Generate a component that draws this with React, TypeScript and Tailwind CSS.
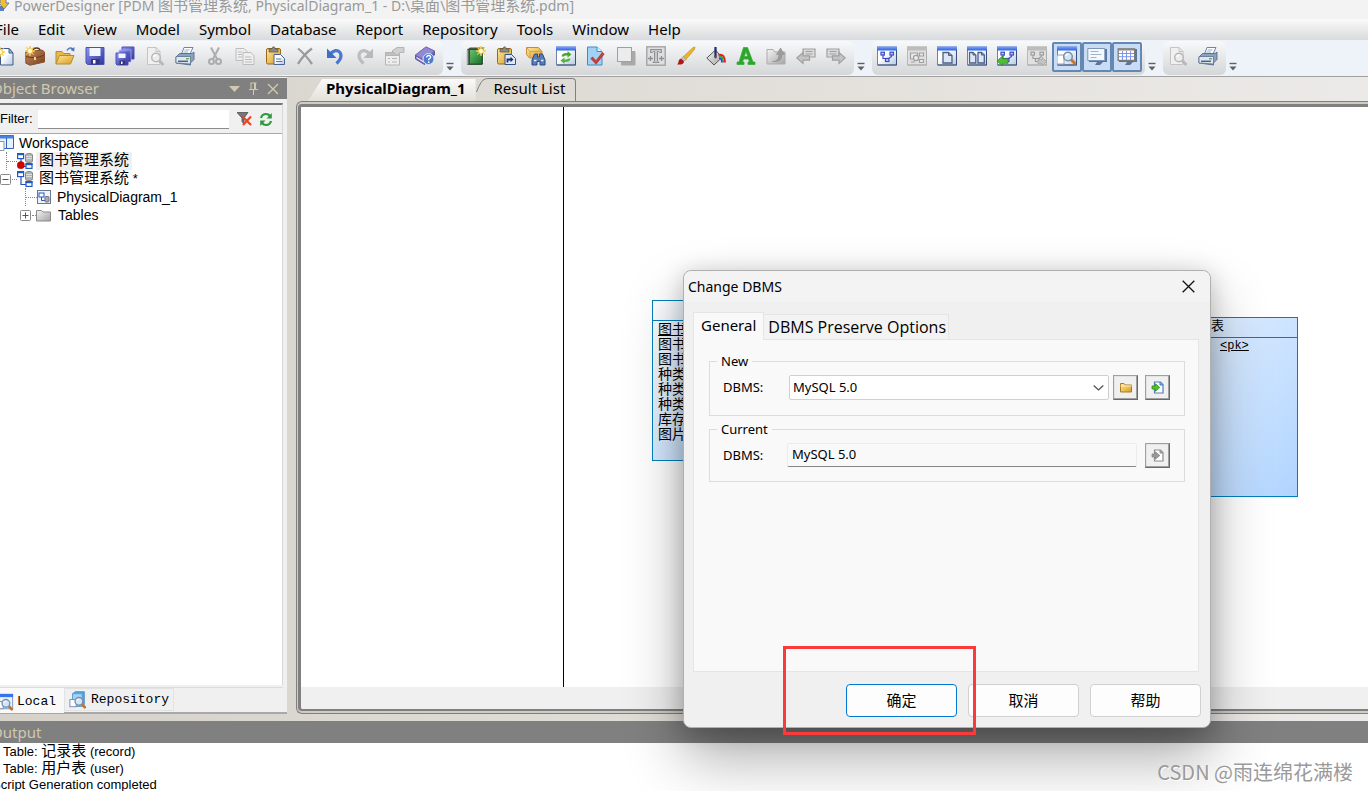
import React, { useState } from "react";

type IconName =
  | "new" | "case" | "open" | "save" | "saveAll" | "preview" | "print" | "cut" | "copy" | "paste"
  | "delete" | "undo" | "redo" | "props" | "help" | "book" | "pasteLink" | "find" | "refreshWin"
  | "check" | "shadow" | "textFmt" | "brush" | "bucket" | "fontA" | "folderUp" | "back" | "forward"
  | "diagram" | "diagramGrey" | "page" | "pages" | "diagramBack" | "diagramFwd" | "browser"
  | "output" | "list";

const Gradients = () => (
  <svg width="0" height="0" className="absolute" aria-hidden="true">
    <defs>
      <linearGradient id="gGold" x1="0" y1="0" x2="1" y2="1"><stop offset="0" stopColor="#ffe9a0" /><stop offset="1" stopColor="#d99a1c" /></linearGradient>
      <linearGradient id="gBrown" x1="0" y1="0" x2="1" y2="1"><stop offset="0" stopColor="#c98a5a" /><stop offset="1" stopColor="#74401f" /></linearGradient>
      <linearGradient id="gBlue" x1="0" y1="0" x2="1" y2="1"><stop offset="0" stopColor="#8f96f0" /><stop offset="1" stopColor="#2c339c" /></linearGradient>
      <linearGradient id="gPage" x1="0" y1="0" x2="1" y2="1"><stop offset="0.4" stopColor="#ffffff" /><stop offset="1" stopColor="#b4c8e4" /></linearGradient>
      <linearGradient id="gGrey" x1="0" y1="0" x2="1" y2="1"><stop offset="0" stopColor="#f4f4f4" /><stop offset="1" stopColor="#a4a4a4" /></linearGradient>
      <linearGradient id="gGreen" x1="0" y1="0" x2="1" y2="1"><stop offset="0" stopColor="#6cc46c" /><stop offset="1" stopColor="#17702a" /></linearGradient>
      <linearGradient id="gBar" x1="0" y1="0" x2="0" y2="1"><stop offset="0" stopColor="#7ba6ff" /><stop offset="1" stopColor="#2f62dc" /></linearGradient>
    </defs>
  </svg>
);

const Star = ({ x, y }: { x: number; y: number }) => (
  <g transform={`translate(${x} ${y})`}>
    <path d="M0-5 1-1.6 3.6-3.6 1.8-.9 5 0 1.8 1 3.6 3.6 1 1.7 0 5-1 1.7-3.6 3.6-1.8 1-5 0-1.8-.9-3.6-3.6-1-1.6z" fill="#ffd84a" stroke="#f5c64a" strokeWidth=".8" />
    <circle r="2" fill="#fffbe0" />
  </g>
);

const Lens = ({ x, y, grey }: { x: number; y: number; grey?: boolean }) => (
  <g transform={`translate(${x} ${y})`}>
    <path d="M3 3 6.500 6.500" stroke={grey ? "#b8b8b8" : "#c8752a"} strokeWidth="3" strokeLinecap="round" />
    <circle r="4.300" fill={grey ? "#ececec" : "#cfe6fa"} stroke={grey ? "#b8b8b8" : "#7c8ea4"} strokeWidth="1.500" />
    <path d="M-2.300-.5A2.500 2.500 0 0 1 .5-2.300" stroke="#fff" strokeWidth="1.300" fill="none" />
  </g>
);

const Win = ({ grey, children }: { grey?: boolean; children?: React.ReactNode }) => (
  <>
    <rect x=".5" y="1" width="19" height="18" fill={grey ? "#e0e0e0" : "url(#gPage)"} stroke={grey ? "#b8b8b8" : "#6d82a8"} />
    <path d="M19.500 4v15H1" fill="none" stroke={grey ? "#acacac" : "#3c5078"} />
    <rect x="0" y=".5" width="20" height="4" fill={grey ? "#bcbcbc" : "url(#gBar)"} />
    {children}
  </>
);

const Nodes = ({ grey }: { grey?: boolean }) => (
  <g fill={grey ? "#e8e8e8" : "#c8d0ff"} stroke={grey ? "#9c9c9c" : "#3a49c4"} strokeWidth="1.200">
    <path d="M6 9v3.500h3M14.500 9v1.500L11 13" fill="none" />
    <rect x="4" y="6.200" width="3.400" height="2.800" /><rect x="13" y="6.200" width="3.400" height="2.800" /><rect x="8.500" y="12.500" width="3.400" height="3" />
  </g>
);

const Printer = () => (
  <>
    <path d="m6.500 8 2.500-6.500h9L15 8z" fill="#fff" stroke="#6d86a8" />
    <path d="m9.500 4h5M8.500 6H13" stroke="#9ab0cc" />
    <path d="M1 11 4.500 7.500h12.500l2-1.500v7.500L15.500 17v2L1 17z" fill="#8da2bd" stroke="#4c6280" strokeWidth=".8" />
    <path d="M1 10.500h14.500V18L1 17z" fill="#dfe8f2" stroke="#5a7090" strokeWidth=".8" />
    <path d="M3 15.300h10" stroke="#4c6280" strokeWidth="1.500" /><path d="M11 12.700h3" stroke="#56b552" strokeWidth="1.400" />
  </>
);

const Clip = () => (
  <>
    <rect x="1.500" y="2.500" width="14" height="15.500" rx="1.500" fill="url(#gGold)" stroke="#9a6a12" />
    <path d="M4 6V3h3q.3-2.300 1.600-2.300T10.200 3h2.800v3z" fill="#8a8a8a" stroke="#555" strokeWidth=".7" />
  </>
);

function glyph(name: IconName): React.ReactNode {
  switch (name) {
    case "new":
      return <><path d="M5.500 2.500H14l4 4.500v12H5.500z" fill="url(#gPage)" stroke="#3e5c86" /><path d="M14 2.500V7h4z" fill="#a4c0e4" stroke="#3e5c86" /><Star x={5} y={6} /></>;
    case "case":
      return <><path d="M8 5q0-3 3.500-3T15 5" fill="none" stroke="#5f3417" strokeWidth="1.600" /><path d="M.8 6 17 4l2.500 2V16L5 19.200l-4.200-2z" fill="url(#gBrown)" stroke="#8a5030" /><path d="M1 10.500q10 3 18-1.500" stroke="#6a3c1c" fill="none" /><path d="M10 11v3" stroke="#f3d38a" strokeWidth="2" /><Star x={5} y={5} /></>;
    case "open":
      return <><path d="M1 18V5.500h6l1.500 2H15V11" fill="#e9b84a" stroke="#b98a2c" /><path d="m1 18 3.500-8.500H19L15.500 18z" fill="url(#gGold)" stroke="#b98a2c" /><path d="M12 4.500q2-4 6-1.500" fill="none" stroke="#4f78b8" strokeWidth="1.500" /><path d="m19.500 1-.3 4.600L15.500 4z" fill="#4f78b8" /></>;
    case "save":
      return <><path d="M1 1.500h18v17H2.500L1 17z" fill="url(#gBlue)" stroke="#4a50b8" /><path d="M4.500 2h11v8h-11z" fill="#f2f5ff" /><path d="M6 13h8.500v5.500H6z" fill="#35357a" /><path d="M8 14h2.500v3.500H8z" fill="#fff" /></>;
    case "saveAll":
      return <><path d="M7 1h12v12H7z" fill="url(#gBlue)" stroke="#4a50b8" /><path d="M4 4h12v12H4z" fill="url(#gBlue)" stroke="#b8bcf4" strokeWidth=".7" /><path d="M1 7h12v12H2l-1-1z" fill="url(#gBlue)" stroke="#4a50b8" /><path d="M3.500 7.500h7v4.500h-7z" fill="#f2f5ff" /><path d="M4.500 14.500h5.500V19H4.500z" fill="#35357a" /><path d="M6 15.500h1.500V18H6z" fill="#fff" /></>;
    case "preview":
      return <><path d="M2.500 1.500H11l4 4v13H2.500z" fill="#f0f0f0" stroke="#c4c4c4" /><path d="M11 1.500v4h4" fill="none" stroke="#c4c4c4" /><Lens x={11} y={11.5} grey /></>;
    case "print":
      return <Printer />;
    case "cut":
      return <g stroke="#adadad" fill="none" strokeWidth="2"><path d="M6 1.500 12 13M14 1.500 8 13" /><circle cx="6.500" cy="15.500" r="2.500" /><circle cx="13.500" cy="15.500" r="2.500" /></g>;
    case "copy":
      return <g fill="#eee" stroke="#bcbcbc"><path d="M1 2.500h8l3 3v9H1z" /><path d="M8 6.500h8l3 3v9H8z" /><path d="M10 11h6M10 13.500h7M10 16h7M3 6h4M3 8.500h4M3 11h4" /></g>;
    case "paste":
      return <><Clip /><path d="M9 8.500h6.500l4 4v6H9z" fill="url(#gPage)" stroke="#4a6594" /><path d="M11 13h5M11 15.500h6.500" stroke="#5876a8" /></>;
    case "delete":
      return <path d="M3 2.500Q10 8 17 18M17 2.500Q9 8 3 18" stroke="#9a9a9a" strokeWidth="2.200" fill="none" />;
    case "undo":
      return <><path d="M5 8q6-6 10-1.500 3 5-3.500 11" fill="none" stroke="#4a78d0" strokeWidth="3.200" /><path d="M2 2.500v9.500h9.500z" fill="#3e6fc4" /></>;
    case "redo":
      return <><path d="M15 8q-6-6-10-1.500-3 5 3.500 11" fill="none" stroke="#bdbdbd" strokeWidth="3.200" /><path d="M18 2.500v9.500H8.500z" fill="#b9b9b9" /></>;
    case "props":
      return <g stroke="#b4b4b4"><path d="M.5 6.500h14V19H.5z" fill="#eee" /><path d="M.5 6.500h14v3H.5z" fill="#c0c0c0" /><path d="M3 12.500h2M7 12.500h5M3 16h2M7 16h5" /><path d="M7 5l5-3.500h7v5h-4l-3 3z" fill="#d0d0d0" /></g>;
    case "help":
      return <><path d="M.5 9 11 1l8.500 4v4L9.500 18.500.5 13z" fill="#6e5fb0" stroke="#6455a0" /><path d="M.5 9 11 1l8.500 4L9.500 14z" fill="#9488d0" stroke="#7264b6" strokeWidth=".6" /><path d="m1.500 11.500 8 5" stroke="#f0eefc" strokeWidth="1.200" /><circle cx="13.500" cy="13" r="5.500" fill="#4c7cd0" stroke="#dbe8fb" /><path d="M11.600 11.500q.2-2 2.100-2t1.900 1.800q0 1-1.900 2v1" fill="none" stroke="#fff" strokeWidth="1.400" /><circle cx="13.700" cy="16.200" r=".9" fill="#fff" /></>;
    case "book":
      return <><path d="M1 3.500 4 1.500h14V17l-2 2H1z" fill="#4a564a" /><path d="M3.500 3.500h12.500V18H3.500z" fill="url(#gGreen)" stroke="#1b5b28" /><path d="M1.500 4v14.500" stroke="#9aa" strokeWidth="1.500" /><path d="M17.500 4v13.500" stroke="#fff" /><Star x={15} y={5} /></>;
    case "pasteLink":
      return <><Clip /><path d="M9 8.500h6.500l4 4v6H9z" fill="#dfe9fa" stroke="#32508a" /><path d="M11.500 16.500v-3h3.500" stroke="#1b2f70" strokeWidth="1.800" fill="none" /><path d="m14.500 10.800 3 2.700-3 2.700z" fill="#1b2f70" /></>;
    case "find":
      return <><path d="M.5 1.500h12l3.500 4V12H3.500L.5 8.500z" fill="url(#gGold)" stroke="#c98b38" /><path d="M.5 1.500 4 5.500h12M4 5.500V12" fill="none" stroke="#d9a050" /><path d="M8.500 8h3v3h2V8h3l2.500 6v5h-5v-3.500h-3V19h-5v-5z" fill="#567db8" stroke="#2d4d85" /><path d="M8 14.500h2.500M15 14.500h2.500" stroke="#dcebff" strokeWidth="1.600" /></>;
    case "refreshWin":
      return <Win><path d="M5.500 10.500q.5-3.500 4.500-3.500h1.500V5L15.500 8.400l-4 3V9.500H10q-1.500 0-2 1z" fill="#4aa52c" /><path d="M14.500 12.500q-.5 3.500-4.500 3.500H8.500v2L4.500 14.600l4-3v1.900H10q1.500 0 2-1z" fill="#5ab53a" /></Win>;
    case "check":
      return <><path d="M1.500 1H11l5 4.500v13.500H1.500z" fill="#9fd2f4" stroke="#3f8cc8" /><path d="M11 1v4.500h5" fill="#e4f4ff" stroke="#3f8cc8" /><path d="m5.500 11.500 4.500 5L17.500 7" fill="none" stroke="#c04040" strokeWidth="3" /></>;
    case "shadow":
      return <><rect x="5" y="5" width="14.500" height="14.500" rx="1" fill="#a9a9a9" /><rect x="1.500" y="1.500" width="14" height="14" fill="#ececec" stroke="#a0a0a0" /></>;
    case "textFmt":
      return <><rect x=".8" y=".8" width="18.400" height="18.400" fill="#dedede" stroke="#a4a4a4" strokeWidth="1.400" /><path d="M4.500 6.500V3.500h11v3h-2l-1-1h-1v9.500l1.500 1.500H7l1.500-1.500V5.500h-1l-1 1z" fill="#c8c8c8" stroke="#909090" /><path d="M2 12.500h5M4.500 10v5M13 12.500h5M15.500 10v5" stroke="#909090" strokeWidth="1.300" /></>;
    case "brush":
      return <><path d="m7 11 10-9.500 2-.5-.5 2.500L9.500 14z" fill="#e9b42c" stroke="#c8952a" strokeWidth=".7" /><path d="m5.500 12 2-1.500 2.500 3L8.500 15z" fill="#c9c9c9" stroke="#888" strokeWidth=".6" /><path d="M1 18.500q1.500-1 1.500-3t2.500-3l3 2.700q0 4-7 3.300z" fill="#b81414" /></>;
    case "bucket":
      return <><path d="M.8 12 9.500 4l6.500 7.500L8 19z" fill="url(#gGrey)" stroke="#555" /><path d="M9.500 11V1" stroke="#1c2a6c" strokeWidth="2.200" /><circle cx="9.500" cy="11" r="1.400" fill="#555" /><path d="M12.500 9q6.500-1.500 6.500 7.500" stroke="#e02020" strokeWidth="2" fill="none" /><path d="M13 10.500q4.500-.5 4.300 6" stroke="#20b030" strokeWidth="1.600" fill="none" /><path d="M13 12q3 0 2.800 4.500" stroke="#2040e0" strokeWidth="1.600" fill="none" /></>;
    case "fontA":
      return <path d="M7.500 1.500h4L17 16h2v2.500h-7V16h1.500l-1-3h-5L6.500 16H8v2.500H1V16h2zM8.300 10.500h3.400L10 5.500z" fill="#2ba52b" stroke="#3aae3a" strokeWidth=".8" fillRule="evenodd" />;
    case "folderUp":
      return <g stroke="#acacac"><path d="M1 18V3.500h6l2 2.500h10v12z" fill="url(#gGrey)" /><path d="M6.500 15.500q6 .5 6.500-7h-2.500L14.500 2l4 6.500H16q0 8-9.500 7z" fill="#9c9c9c" stroke="#888" strokeWidth=".5" /></g>;
    case "back":
      return <g fill="#dadada" stroke="#a0a0a0" strokeWidth="1.200"><path d="M7 3h12v8H7z" /><path d="M9.500 5.500h7M9.500 8h7" /><path d="M.8 12 7 6.500v3.300h6.500v4.400H7v3.300z" fill="#c4c4c4" /></g>;
    case "forward":
      return <g fill="#dadada" stroke="#a0a0a0" strokeWidth="1.200"><path d="M1 3h12v8H1z" /><path d="M3.500 5.500h7M3.500 8h7" /><path d="M19.200 12 13 6.500v3.300H6.500v4.400H13v3.300z" fill="#c4c4c4" /></g>;
    case "diagram":
      return <Win><Nodes /></Win>;
    case "diagramGrey":
      return <Win grey><g fill="#eaeaea" stroke="#a0a0a0" strokeWidth="1.200"><path d="M3.500 7h7v6h-7z" /><circle cx="9" cy="12" r="2.600" /><path d="M12.500 7h4v3h-4zM12.500 13.500h4v3h-4zM4 16h4" /></g></Win>;
    case "page":
      return <Win><path d="M6 6.500h5.500L15 9.500V17H6z" fill="#dce6f6" stroke="#4c5f84" strokeWidth="1.300" /><path d="M11.500 6.500v3H15" fill="#8298c0" stroke="#4c5f84" /></Win>;
    case "pages":
      return <Win><path d="M2.500 6.500H6L8.800 9v8H2.500zM11 6.500h3.500l2.800 2.500v8H11z" fill="#dce6f6" stroke="#4c5f84" strokeWidth="1.300" /><path d="M6 6.500V9h2.800M14.500 6.500V9h2.800" fill="#8298c0" stroke="#4c5f84" /></Win>;
    case "diagramBack":
      return <Win><Nodes /><path d="M0 15 5.500 10v2.800H11v4.500H5.500V20z" fill="#4fbf34" stroke="#2e8d28" strokeWidth=".8" /></Win>;
    case "diagramFwd":
      return <Win grey><Nodes grey /><path d="M19.500 15.500 15 11.500v2.200h-4v4h4v2.300z" fill="#c4c4c4" stroke="#acacac" /></Win>;
    case "browser":
      return <Win><rect x="0" y="9" width="7" height="9" fill="#fff" stroke="#8ca0bc" /><Lens x={11} y={10.5} /></Win>;
    case "output":
      return <><path d="M2 3h18v13h-4l-3 3H8l2-3H2z" fill="#5b7599" /><path d="M.8 2.500h17V14.500h-17z" fill="#f4f8ff" stroke="#7d95b8" /><path d="M3.500 5.500h8M3.500 8.500h11M3.500 11.500h6" stroke="#a4b2c6" /></>;
    case "list":
      return <><path d="M2 3h18v13h-4l-3 3H8l2-3H2z" fill="#5b7599" /><path d="M1.200 2.800h16.500v11.500H1.200z" fill="#fff" stroke="#7a7a78" strokeWidth="1.300" /><path d="M1.500 3.500h16" stroke="#868684" strokeWidth="2" /><path d="M2 7.500h15M2 10.700h15M5.500 5v9M9.500 5v9M13.500 5v9" stroke="#7f97e6" /></>;
  }
}

function ToolButton({ name, label, pressed }: { name: IconName; label: string; pressed?: boolean }) {
  return (
    <button
      type="button"
      aria-label={label}
      aria-pressed={pressed}
      className={
        pressed
          ? "flex h-[30px] w-[30px] shrink-0 items-start justify-center rounded-xs border-2 border-[#6488b4] bg-[#c9dcf4] pt-0.5"
          : "flex h-[30px] w-[30px] shrink-0 items-start justify-center pt-1"
      }
    >
      <svg width="20" height="20" viewBox="0 0 20 20">{glyph(name)}</svg>
    </button>
  );
}

const Overflow = ({ label }: { label: string }) => (
  <button type="button" aria-label={label} className="flex w-[18px] shrink-0 items-end pb-1 pl-0.5">
    <svg width="10" height="10" viewBox="0 0 10 10"><path d="M1.500 1.500h7" stroke="#606060" strokeWidth="1.400" /><path d="M1.500 4.500h7L5 8.500z" fill="#606060" /></svg>
  </button>
);

type Tool = [IconName, string, boolean?];
const groups: Tool[][] = [
  [["new", "New"], ["case", "New Project"], ["open", "Open"], ["save", "Save"], ["saveAll", "Save All"], ["preview", "Print Preview"], ["print", "Print"], ["cut", "Cut"], ["copy", "Copy"], ["paste", "Paste"], ["delete", "Delete"], ["undo", "Undo"], ["redo", "Redo"], ["props", "Properties"], ["help", "Help"]],
  [["book", "New Report"], ["pasteLink", "Paste as Shortcut"], ["find", "Find Objects"], ["refreshWin", "Refresh"], ["check", "Check Model"], ["shadow", "Shadow"], ["textFmt", "Adjust to Text"], ["brush", "Line Style"], ["bucket", "Fill"], ["fontA", "Font"], ["folderUp", "Up One Level"], ["back", "Previous"], ["forward", "Next"]],
  [["diagram", "Diagram"], ["diagramGrey", "View Diagram"], ["page", "Page"], ["pages", "All Pages"], ["diagramBack", "Previous Diagram"], ["diagramFwd", "Next Diagram"], ["browser", "Browser", true], ["output", "Output", true], ["list", "Result List", true]],
  [["preview", "Preview"], ["print", "Print Diagram"]],
];

const menus = ["File", "Edit", "View", "Model", "Symbol", "Database", "Report", "Repository", "Tools", "Window", "Help"];

const ModelIcon = ({ dot }: { dot?: boolean }) => (
  <svg width="16" height="16" viewBox="0 0 16 16" className="shrink-0">
    <path d="M4 5v8.500h5" fill="none" stroke="#2a4fb0" strokeWidth="1.200" />
    <rect x=".6" y=".6" width="6" height="5" fill="#fff" stroke="#1e5ac8" strokeWidth="1.200" /><path d="M0 1.200h7" stroke="#1e5ac8" strokeWidth="2" />
    <path d="M8.500 2q0-1.500 3.500-1.500T15.500 2v6q0 1.500-3.500 1.500T8.500 8z" fill="#b4b4b4" stroke="#888" /><path d="M9 3.500h6M9 5.500h6" stroke="#ddd" />
    <rect x="9" y="10.600" width="6" height="4.800" fill="#fff" stroke="#1e5ac8" strokeWidth="1.200" /><path d="M8.500 11.200h7" stroke="#1e5ac8" strokeWidth="2" />
    {dot && <circle cx="3.800" cy="12.200" r="3.600" fill="#d40000" stroke="#900" strokeWidth=".5" />}
  </svg>
);

const Expander = ({ open }: { open: boolean }) => (
  <svg width="11" height="11" viewBox="0 0 11 11" className="shrink-0">
    <rect x=".5" y=".5" width="10" height="10" rx="1" fill="#fff" stroke="#8a8a8a" />
    <path d={open ? "M2.500 5.500h6" : "M2.500 5.500h6M5.500 2.500v6"} stroke="#2a5aa8" />
  </svg>
);

const BrowserIcon = ({ server }: { server?: boolean }) => (
  <svg width="18" height="18" viewBox="0 0 20 20">
    {server ? (
      <><path d="M4 3 7 .8h10V15l-2.500 2H4z" fill="#5aa2d8" stroke="#4a90cc" /><path d="M4 3h10.500v14H4z" fill="#a4d4f4" stroke="#5aa2d8" /></>
    ) : (
      <><rect x="1.500" y="1.500" width="17" height="16" fill="#e8f2ff" stroke="#6d92c8" /><path d="M1 2.800h18" stroke="#3874e8" strokeWidth="3.600" /></>
    )}
    <rect x="1" y="9.500" width="7" height="8" fill="#fff" stroke="#7488a8" /><Lens x={11} y={11.5} />
  </svg>
);

function ObjectBrowser() {
  return (
    <aside className="flex w-[287px] shrink-0 flex-col border-b-2 border-[#a8a8a8] bg-[#f0f0f0]">
      <header className="mt-px flex h-[21px] items-center overflow-hidden bg-[#808080] pr-2 text-[15px] leading-5 text-[#d0c9ae]">
        <span className="-ml-[9px] flex-1 pb-0.5">Object Browser</span>
        <button type="button" aria-label="Panel menu" className="mr-2"><svg width="11" height="6"><path d="M0 0h11L5.500 6z" fill="#d0c9ae" /></svg></button>
        <button type="button" aria-label="Pin" className="mr-2"><svg width="11" height="13" viewBox="0 0 11 13"><path d="M2.500 1h6M3 1v6M7.500 1v6M6.500 1v6M1 7.500h9M5.500 7.500V13" stroke="#d0c9ae" /></svg></button>
        <button type="button" aria-label="Close panel"><svg width="12" height="12" viewBox="0 0 12 12"><path d="m1 1 10 10M11 1 1 11" stroke="#d0c9ae" strokeWidth="1.400" /></svg></button>
      </header>
      <div className="mt-1 mr-1 flex min-h-0 flex-1 flex-col border-t-2 border-r border-t-[#767676] border-r-[#d8d8d8] bg-white">
        <div className="flex h-[29px] shrink-0 items-center border-b border-[#a8a8a8] bg-[#f0f0f0] font-['Liberation_Sans','Noto_Sans_CJK_SC',sans-serif] text-[13px]">
          <label htmlFor="filter" className="w-[38px]">Filter:</label>
          <input id="filter" className="h-[19px] w-[191px] border-b border-[#8c8c8c] bg-white px-1 outline-none" />
          <button type="button" aria-label="Clear filter" className="ml-2"><svg width="16" height="14" viewBox="0 0 16 14"><path d="M0 .5h11L7 6v6L5 9.500V6z" fill="#777" stroke="#444" strokeWidth=".7" /><path d="m5.500 4.500 8.500 8.500M14 4.500 6 13" stroke="#f0431f" strokeWidth="2.200" /></svg></button>
          <button type="button" aria-label="Refresh" className="ml-1.5"><svg width="14" height="15" viewBox="0 0 14 15"><path d="M2 6q1-4 5-4 2.500 0 4 2M12 9q-1 4-5 4-2.500 0-4-2" fill="none" stroke="#2b9a3a" strokeWidth="2.200" /><path d="M12.800 1v5.500H7.500zM1.200 14V8.500h5.300z" fill="#2b9a3a" /></svg></button>
        </div>
        <ul className="flex-1 font-['Liberation_Sans','Noto_Sans_CJK_SC',sans-serif] text-[14px] leading-[18px]">
          <li className="flex h-[18px] items-center">
            <svg width="14" height="16" viewBox="0 0 14 16"><path d="M-2 .5h15.500v13H-2z" fill="#e8f0fb" stroke="#2e62c0" /><path d="M-2 2h15.500" stroke="#4a82e0" strokeWidth="3" /><path d="M6.500 3v10" stroke="#2e62c0" /><path d="M-1 6.500h5v9h-5z" fill="#fff" stroke="#8894a8" /></svg>
            <span className="ml-[5px]">Workspace</span>
          </li>
          <li className="flex h-[18px] items-center">
            <span className="ml-1.5 h-[18px] w-[11px] shrink-0 border-l border-dotted border-[#888]"><span className="mt-[9px] block border-t border-dotted border-[#888]" /></span>
            <ModelIcon dot />
            <span className="ml-[3px] h-[18px] bg-[#f0f0f0] px-[3px] text-[15px] leading-4">图书管理系统</span>
          </li>
          <li className="flex h-[18px] items-center">
            <Expander open /><span className="ml-px w-[5px] border-t border-dotted border-[#888]" />
            <ModelIcon />
            <span className="ml-1.5 h-[18px] text-[15px] leading-4">图书管理系统<span className="text-[13px]"> *</span></span>
          </li>
          <li className="flex h-[18px] items-center">
            <span className="ml-[25px] h-full w-[12px] border-l border-dotted border-[#888]"><span className="mt-[9px] block border-t border-dotted border-[#888]" /></span>
            <svg width="14" height="14" viewBox="0 0 14 14"><rect x=".5" y=".5" width="13" height="13" fill="#eef2fa" stroke="#6a7890" /><rect x="2" y="3" width="5" height="4" fill="#fff" stroke="#1e5ac8" /><path d="M4.500 7v3.500H8" stroke="#1e5ac8" fill="none" /><rect x="8" y="6.500" width="4" height="5.500" rx="1" fill="#aaa" stroke="#777" /></svg>
            <span className="ml-1.5">PhysicalDiagram_1</span>
          </li>
          <li className="flex h-[18px] items-center">
            <span className="ml-5 flex"><Expander open={false} /></span><span className="ml-px w-[4px] border-t border-dotted border-[#888]" />
            <svg width="15" height="13" viewBox="0 0 15 13"><path d="M.5 12V1.500h5L7 3h7.500v9z" fill="url(#gGrey)" stroke="#8a8a8a" /></svg>
            <span className="ml-[7px]">Tables</span>
          </li>
        </ul>
      </div>
      <div className="mt-0.5 mr-1 flex h-[25px] shrink-0 items-start border-t border-[#dcdcdc] font-['Liberation_Mono','Noto_Sans_CJK_SC',monospace] text-[13px]">
        <button type="button" className="-ml-1 flex h-[25px] items-end bg-[#f9f9f9] pr-2 pb-0.5 leading-[18px]"><BrowserIcon /><span className="ml-[3px]">Local</span></button>
        <button type="button" className="flex h-[23px] items-center border border-[#e2e2e2] px-1 leading-[18px]"><BrowserIcon server /><span className="ml-1">Repository</span></button>
      </div>
    </aside>
  );
}

const columns = ["图书", "图书", "图书", "种类", "种类", "种类", "库存", "图片"];

function Workspace() {
  return (
    <main className="flex min-w-0 flex-1 flex-col pb-[7px] pl-[9px]">
      <div className="flex h-6 shrink-0 items-end pl-3 text-[15px] leading-5">
        <button type="button" className="flex h-[22px] items-start bg-linear-to-b from-[#fafafa] to-[#e3e0da] pr-2.5 pl-[18px] font-bold [clip-path:polygon(14px_0,100%_0,100%_100%,0_100%)]"><span className="-mt-px">PhysicalDiagram_1</span></button>
        <button type="button" className="flex h-[23px] items-start">
          <svg width="14" height="23" viewBox="0 0 14 23"><path d="M.5 14Q5 2 9 1 10 .5 14 .5" fill="none" stroke="#808080" /></svg>
          <span className="h-full rounded-tr-sm border-t border-r border-[#808080] pr-2.5 pl-1"><span className="-mt-px block">Result List</span></span>
        </button>
      </div>
      <section className="flex min-h-0 flex-1 flex-col rounded-l-md border border-r-0 border-[#808080] bg-[#cfccc4] pt-0.5 pb-0.5 pl-px">
        <div className="flex min-h-0 flex-1 flex-col rounded-l-sm border-t-3 border-b-2 border-l-3 border-[#808080] bg-[#f0f0f0]">
          <div className="relative mb-[22px] flex-1 overflow-hidden bg-white text-[13px] leading-[15px]">
            <div className="absolute top-0 bottom-0 left-[262px] w-px bg-black" />
            <div className="absolute top-[193px] left-[351px] h-[161px] w-[120px] border border-[#0080c0] bg-linear-to-br from-white to-[#b0d4ff]">
              <div className="h-5 border-b border-[#0080c0]" />
              <ul className="pl-[5px] text-[14px] leading-[15px]">
                {columns.map((c, i) => (
                  <li key={i} className={i === 0 ? "underline" : ""}>{c}</li>
                ))}
              </ul>
            </div>
            <div className="absolute top-[210px] left-[869px] h-[180px] w-[128px] border border-[#0080c0] bg-linear-to-br from-[#e8f3ff] to-[#b0d4ff]">
              <div className="h-5 border-b border-[#0080c0] pl-10">表</div>
              <div className="pt-px pl-[49px] font-['Liberation_Mono',monospace] text-[12px] underline">&lt;pk&gt;</div>
            </div>
          </div>
        </div>
      </section>
    </main>
  );
}

const SmallButton = ({ label, disabled, children }: { label: string; disabled?: boolean; children: React.ReactNode }) => (
  <button type="button" aria-label={label} disabled={disabled} className="flex h-[25px] w-[25px] shrink-0 items-center justify-center border border-t-[#a0a0a0] border-r-[#696969] border-b-[#696969] border-l-[#a0a0a0] bg-[#f0f0f0] shadow-[inset_-1px_-1px_0_#a0a0a0,inset_1px_1px_0_#e3e3e3]">
    {children}
  </button>
);

const ImportIcon = ({ grey }: { grey?: boolean }) => (
  <svg width="13" height="13" viewBox="0 0 13 13">
    <path d="M3.500 1h6l2.500 2.500v8.500H3.500z" fill="#fff" stroke={grey ? "#8c8c8c" : "#5a78b4"} strokeWidth="1.200" />
    <path d="M9 1v3h3" fill={grey ? "#aaa" : "#7ec0f0"} stroke={grey ? "#8c8c8c" : "#2a7ed0"} />
    <path d="M1 5h3.500V2.800L8.800 6.500 4.500 10.200V8H1z" fill={grey ? "#999" : "#4ec822"} stroke={grey ? "#888" : "#2f9018"} strokeWidth=".8" />
  </svg>
);

function ChangeDbmsDialog() {
  const [dbms, setDbms] = useState("MySQL 5.0");
  const action = "h-[33px] w-[111px] rounded-[4px] border bg-[#fdfdfd] text-[15px] font-['Noto_Sans_CJK_SC',sans-serif]";
  return (
    <div role="dialog" aria-labelledby="dlg-title" className="absolute top-[270px] left-1/2 -ml-px w-[528px] rounded-lg border border-[#b0b0b0] bg-[#f0f0f0] pb-[10px] shadow-[0_30px_60px_rgba(0,0,0,0.32),0_4px_24px_rgba(0,0,0,0.2)]">
      <header className="flex h-[31px] items-center rounded-t-lg bg-[#f3f3f3] pr-[15px] pl-1">
        <h2 id="dlg-title" className="flex-1 text-[14px]">Change DBMS</h2>
        <button type="button" aria-label="Close"><svg width="13" height="13" viewBox="0 0 13 13"><path d="m.7.7 11.600 11.600M12.300.7.7 12.300" stroke="#111" strokeWidth="1.300" /></svg></button>
      </header>
      <div role="tablist" className="mt-[10px] ml-[9px] flex items-end text-[15px]">
        <button type="button" role="tab" aria-selected="true" className="relative -mb-px h-[28px] border border-b-0 border-[#e5e5e5] bg-[#f9f9f9] px-[7px] pb-0.5">General</button>
        <button type="button" role="tab" aria-selected="false" className="h-[25px] border border-b-0 border-l-0 border-[#e5e5e5] bg-[#f3f3f3] pr-0.5 pl-1 font-['Open_Sans',sans-serif] text-[16px] leading-6">DBMS Preserve Options</button>
      </div>
      <div className="mr-[11px] ml-[9px] h-[333px] border border-[#e5e5e5] bg-[#f9f9f9] pt-3 pr-[13px] pl-[15px] text-[13px] leading-[18px]">
        <fieldset className="h-[64px] border border-[#dcdcdc] pr-[14px] pl-[13px]">
          <legend className="-ml-1.5 px-1">New</legend>
          <div className="flex items-start pt-[5px]">
            <label htmlFor="new-dbms" className="w-[66px] pt-[3px]">DBMS:</label>
            <div className="relative flex-1">
              <select id="new-dbms" value={dbms} onChange={(e) => setDbms(e.target.value)} className="h-[25px] w-full appearance-none rounded-xs border border-[#d0d0d0] bg-white pb-0.5 pl-[3px] outline-none">
                <option>MySQL 5.0</option>
              </select>
              <svg width="11" height="6" viewBox="0 0 11 6" className="pointer-events-none absolute top-[10px] right-[5px]"><path d="m.7.5 4.800 4.500L10.300.5" fill="none" stroke="#505050" strokeWidth="1.200" /></svg>
            </div>
            <span className="ml-1 flex"><SmallButton label="Browse"><svg width="12" height="11" viewBox="0 0 12 11"><path d="M.5 10V1.500H4L5.500 3h6v7z" fill="url(#gGold)" stroke="#a87c24" /><path d="M.5 4h11" stroke="#fff2b8" /></svg></SmallButton></span>
            <span className="ml-[7px] flex"><SmallButton label="New DBMS properties"><ImportIcon /></SmallButton></span>
          </div>
        </fieldset>
        <fieldset className="mt-1 h-[62px] border border-[#dcdcdc] pr-[14px] pl-[13px]">
          <legend className="-ml-1.5 px-1">Current</legend>
          <div className="flex items-start pt-[5px]">
            <label htmlFor="cur-dbms" className="w-[64px] pt-[3px]">DBMS:</label>
            <input id="cur-dbms" readOnly value="MySQL 5.0" className="h-[24px] min-w-0 flex-1 rounded-xs border border-[#ececec] border-b-[#868686] bg-[#f9f9f9] pb-0.5 pl-1 outline-none" />
            <span className="ml-2 flex"><SmallButton label="Current DBMS properties" disabled><ImportIcon grey /></SmallButton></span>
          </div>
        </fieldset>
      </div>
      <footer className="mt-3 flex justify-end gap-[11px] pr-[9px]">
        <button type="button" className={`${action} border-[#0078d4]`}>确定</button>
        <button type="button" className={`${action} border-[#d0d0d0]`}>取消</button>
        <button type="button" className={`${action} border-[#d0d0d0]`}>帮助</button>
      </footer>
      <div className="pointer-events-none absolute top-[375px] left-[99px] h-[89px] w-[193px] border-3 border-[#fb3b3b]" />
    </div>
  );
}

export default function App() {
  return (
    <div className="relative flex h-screen flex-col overflow-hidden bg-linear-to-r from-[#d6d2ca] to-[#eceae8] font-['Noto_Sans','Noto_Sans_CJK_SC',sans-serif] text-black">
      <Gradients />
      <div className="flex h-[19px] shrink-0 items-start bg-[#f3f3f3] text-[14px] leading-5 whitespace-nowrap text-[#999]">
        <svg width="14" height="14" viewBox="0 0 14 14"><path d="M-4 6h8v5h-8z" fill="#5c7fc0" /><path d="M0-4h6v7h3L4 9-1 3h1z" fill="#f2bf30" stroke="#4668b0" strokeWidth=".8" /></svg>
        <h1 className="-mt-[5px]">
          PowerDesigner [PDM <span className="text-[15px]">图书管理系统</span>, PhysicalDiagram_1 - D:\<span className="text-[15px]">桌面</span>\<span className="text-[15px]">图书管理系统</span>.pdm]
        </h1>
      </div>
      <nav className="flex h-[21px] shrink-0 items-center gap-[19px] bg-linear-to-b from-[#fafafa] to-[#d9dadc] pb-0.5 text-[15px] leading-5">
        {menus.map((m, i) => (
          <button key={m} type="button" className={i === 0 ? "-ml-[5px]" : ""}>{m}</button>
        ))}
      </nav>
      <div className="flex h-[37px] shrink-0 border-b border-[#a0a0a0] bg-[#eef3fa] pt-px">
        {groups.map((g, i) => (
          <React.Fragment key={i}>
            <div className={`flex h-[34px] shrink-0 rounded-r-md bg-linear-to-b from-[#f8f9fa] to-[#d4d6d8] pt-px pr-[3px] ${i === 0 ? "-ml-[10px]" : "rounded-l-md"}`}>
              {g.map(([name, label, pressed]) => (
                <ToolButton key={label} name={name} label={label} pressed={pressed} />
              ))}
            </div>
            <Overflow label={`Toolbar ${i + 1} options`} />
          </React.Fragment>
        ))}
      </div>
      <div className="flex min-h-0 flex-1">
        <div className="flex pb-[7px]"><ObjectBrowser /></div>
        <Workspace />
      </div>
      <section className="h-[70px] shrink-0 bg-white">
        <header className="h-[22px] bg-[#808080] text-[15px] leading-[22px] text-[#d0c9ae]"><span className="-ml-[9px]">Output</span></header>
        <div className="font-['Liberation_Sans','Noto_Sans_CJK_SC',sans-serif] text-[13px] leading-4">
          <p className="pl-[3px]">Table: <span className="text-[15px]">记录表</span> (record)</p>
          <p className="pl-[3px]">Table: <span className="text-[15px]">用户表</span> (user)</p>
          <p className="-ml-2">Script Generation completed</p>
        </div>
      </section>
      <ChangeDbmsDialog />
      <div className="absolute right-[15px] bottom-1 font-['Noto_Sans_CJK_SC',sans-serif] text-[20px] leading-[30px] text-[#9a9a9a] [text-shadow:1px_1px_0_#fff]">CSDN @雨连绵花满楼</div>
    </div>
  );
}
